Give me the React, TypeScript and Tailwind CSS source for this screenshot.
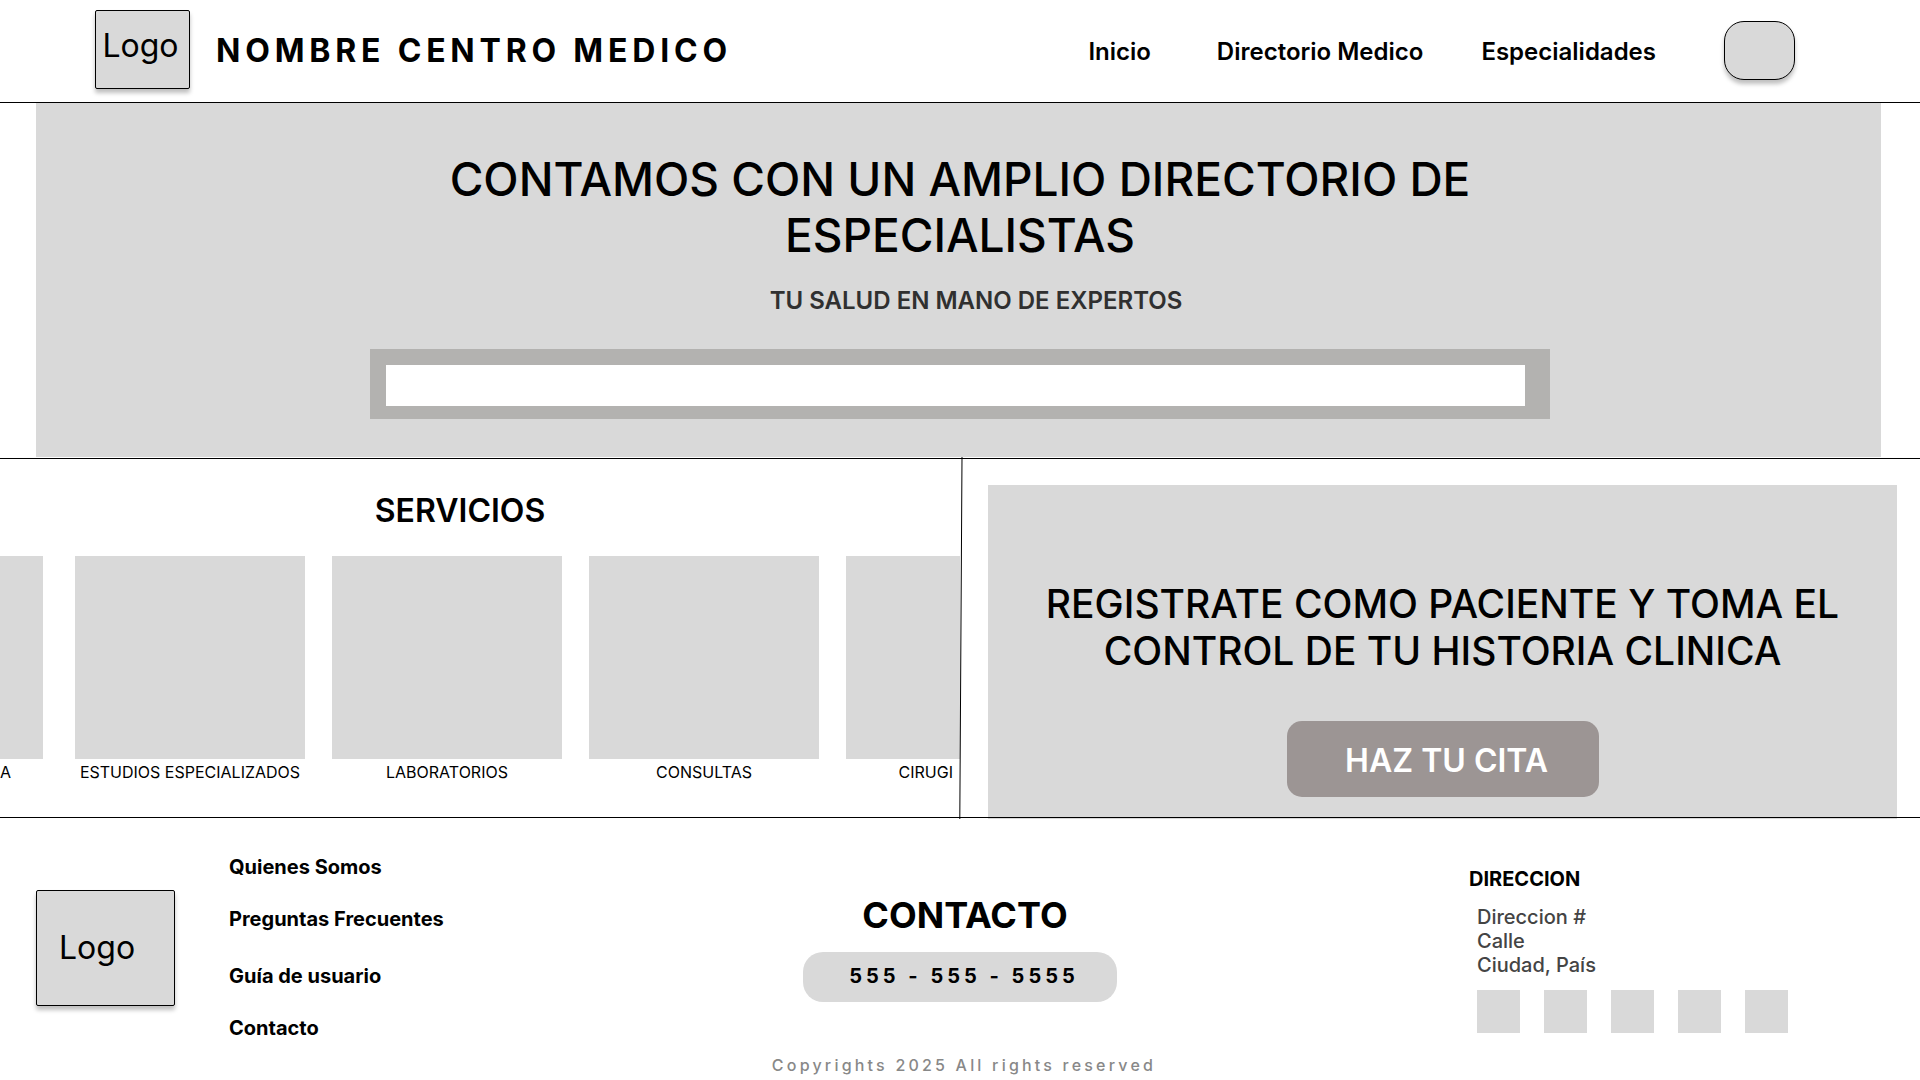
const navLinks = [
  { label: "Inicio", spacing: "mr-[66px] pt-0.5" },
  { label: "Directorio Medico", spacing: "mr-[58px] pt-0.5" },
  { label: "Especialidades", spacing: "mr-[68px] pt-0.5" },
];

const services = ["ESTUDIOS ESPECIALIZADOS", "LABORATORIOS", "CONSULTAS"];

const footerLinks = [
  ["Quienes Somos", "Preguntas Frecuentes"],
  ["Guía de usuario", "Contacto"],
];

const socialNetworks = ["Facebook", "Instagram", "X", "YouTube", "LinkedIn"];

function Header() {
  return (
    <header className="flex items-center border-b border-black pt-2.5 pr-[125px] pb-[13px] pl-[95px]">
      <div className="flex h-[79px] w-[95px] shrink-0 justify-center rounded-xs border border-black bg-[#d9d9d9] pt-[15px] pr-1 text-[32px] leading-10 shadow-[0_4px_4px_rgba(0,0,0,0.25)]">
        Logo
      </div>
      <span className="ml-[26px] pt-[3px] text-[32px] leading-10 font-bold tracking-[0.15em]">
        NOMBRE CENTRO MEDICO
      </span>
      <nav className="mt-0.5 ml-auto flex items-center text-2xl font-semibold">
        {navLinks.map((link) => (
          <a key={link.label} href="#" className={link.spacing}>
            {link.label}
          </a>
        ))}
        <button
          type="button"
          aria-label="Perfil"
          className="h-[59px] w-[71px] rounded-[20px] border border-black bg-[#d9d9d9] shadow-[0_4px_4px_rgba(0,0,0,0.25)]"
        />
      </nav>
    </header>
  );
}

function Hero() {
  return (
    <div className="border-b border-black pb-px">
      <section className="mr-[39px] ml-9 bg-[#d9d9d9] pt-12 pb-[38px] pl-[3px]">
        <h1 className="mx-auto max-w-[1100px] text-center text-[46px] leading-[56px] font-medium">
          CONTAMOS CON UN AMPLIO DIRECTORIO DE ESPECIALISTAS
        </h1>
        <p className="mt-[22px] pl-8 text-center text-2xl leading-8 font-semibold text-[#303030]">
          TU SALUD EN MANO DE EXPERTOS
        </p>
        <form className="mx-auto mt-8 flex max-w-[1180px] bg-[#b3b2b0] pt-4 pr-[25px] pb-[13px] pl-4">
          <input
            type="search"
            aria-label="Buscar especialista"
            className="h-[41px] w-full bg-white px-4 text-xl outline-none"
          />
        </form>
      </section>
    </div>
  );
}

function Services() {
  return (
    <section className="overflow-hidden pt-8 pb-8">
      <h2 className="pr-10 text-center text-[32px] leading-10 font-semibold">SERVICIOS</h2>
      <ul className="mt-[25px] flex gap-[27px] text-base leading-6">
        <li className="mr-[5px] w-[43px] shrink-0">
          <div className="h-[203px] bg-[#d9d9d9]" />
          <p className="mt-px pr-8 text-right">A</p>
        </li>
        {services.map((service) => (
          <li key={service} className="w-[230px] shrink-0 text-center whitespace-nowrap">
            <div className="h-[203px] bg-[#d9d9d9]" />
            <p className="mt-px">{service}</p>
          </li>
        ))}
        <li className="flex-1">
          <div className="h-[203px] bg-[#d9d9d9]" />
          <p className="mt-px pr-[7px] text-right">CIRUGI</p>
        </li>
      </ul>
    </section>
  );
}

function Register() {
  return (
    <section className="mt-[26px] mr-[23px] -mb-0.5 ml-7 flex flex-col items-center bg-[#d9d9d9] pt-[95px] pb-[22px]">
      <h2 className="max-w-[820px] text-center text-[39px] leading-[47px] font-medium">
        REGISTRATE COMO PACIENTE Y TOMA EL CONTROL DE TU HISTORIA CLINICA
      </h2>
      <button
        type="button"
        className="mt-[47px] h-[76px] w-[312px] rounded-[15px] bg-[#9c9594] pt-1 pl-2 text-[32px] leading-10 font-semibold text-white"
      >
        HAZ TU CITA
      </button>
    </section>
  );
}

function Footer() {
  return (
    <footer className="relative grid grid-cols-3 border-t border-black text-xl leading-6">
      <div className="flex items-start">
        <div className="mt-[72px] ml-9 flex h-[116px] w-[139px] shrink-0 items-center rounded-xs border border-black bg-[#d9d9d9] pl-[22px] text-[32px] leading-10 shadow-[0_4px_4px_rgba(0,0,0,0.25)]">
          Logo
        </div>
        <nav className="mt-[37px] ml-[54px] flex flex-col gap-[33px] font-bold">
          {footerLinks.map((group) => (
            <div key={group[0]} className="flex flex-col gap-7">
              {group.map((label) => (
                <a key={label} href="#">
                  {label}
                </a>
              ))}
            </div>
          ))}
        </nav>
      </div>

      <div className="flex flex-col items-center pt-[75px] pb-1">
        <h2 className="pl-2.5 text-[36px] leading-[44px] font-bold">CONTACTO</h2>
        <a
          href="tel:5555555555"
          className="mt-[15px] flex h-[50px] w-[314px] items-center justify-center rounded-[20px] bg-[#d9d9d9] pb-0.5 pl-2 font-bold tracking-[0.2em]"
        >
          555 - 555 - 5555
        </a>
        <p className="mt-[53px] pl-2 text-base leading-5 font-medium tracking-[0.2em] text-[#888888]">
          Copyrights 2025 All rights reserved
        </p>
      </div>

      <div className="pt-[49px] pl-[189px]">
        <h2 className="font-bold">DIRECCION</h2>
        <address className="mt-3.5 ml-2 font-medium text-[#444444] not-italic">
          Direccion #
          <br />
          Calle
          <br />
          Ciudad, País
        </address>
        <div className="mt-[13px] ml-2 flex gap-6">
          {socialNetworks.map((network) => (
            <a key={network} href="#" aria-label={network} className="size-[43px] bg-[#d9d9d9]" />
          ))}
        </div>
      </div>
    </footer>
  );
}

export default function App() {
  return (
    <div className="min-h-screen overflow-x-hidden bg-white font-['Inter',sans-serif] text-black">
      <Header />
      <Hero />
      <main className="relative grid grid-cols-2">
        <Services />
        <Register />
        <svg
          className="absolute -top-0.5 left-1/2 -ml-1 h-[calc(100%+4px)] w-2"
          viewBox="0 0 8 362"
          preserveAspectRatio="none"
          aria-hidden="true"
        >
          <line x1="6" y1="0" x2="3.8" y2="362" stroke="black" />
        </svg>
      </main>
      <Footer />
    </div>
  );
}
